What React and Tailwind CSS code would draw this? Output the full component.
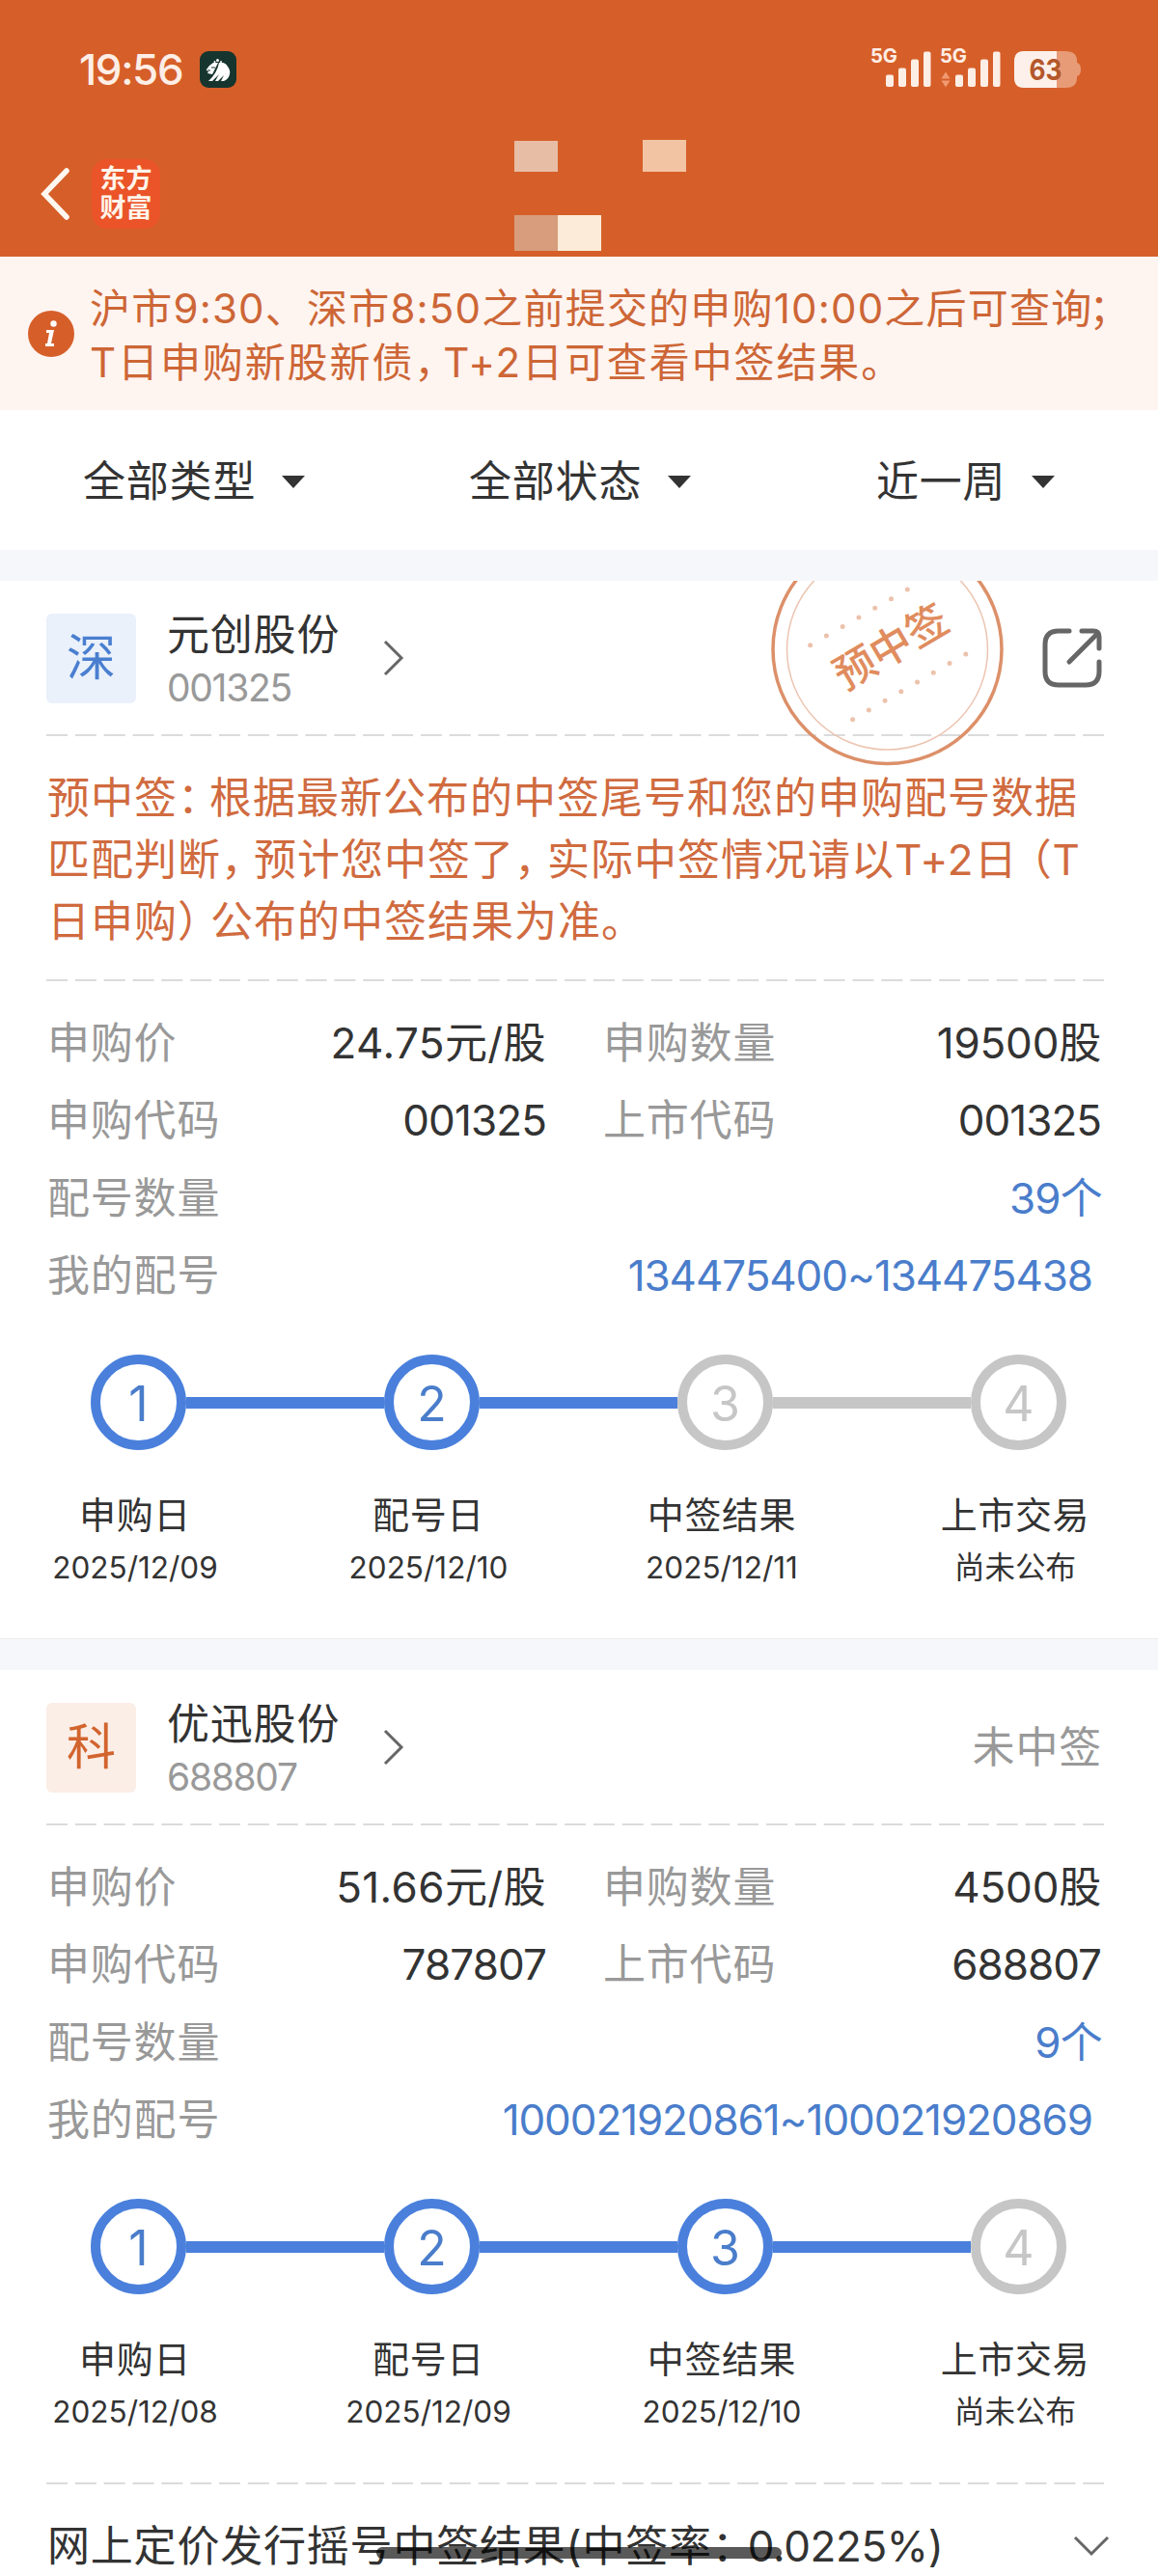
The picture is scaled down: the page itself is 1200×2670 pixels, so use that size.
import React from "react";

const steps = ["申购日", "配号日", "中签结果", "上市交易"];

const stocks = [
  {
    tag: "深",
    tagStyle: "bg-[#eaf1fb] text-[#4a7fd0]",
    name: "元创股份",
    code: "001325",
    won: true,
    price: "24.75元/股",
    amount: "19500股",
    applyCode: "001325",
    listCode: "001325",
    count: "39个",
    range: "134475400~134475438",
    done: 2,
    dates: ["2025/12/09", "2025/12/10", "2025/12/11", "尚未公布"],
  },
  {
    tag: "科",
    tagStyle: "bg-[#fbeee7] text-[#d2642e]",
    name: "优迅股份",
    code: "688807",
    won: false,
    price: "51.66元/股",
    amount: "4500股",
    applyCode: "787807",
    listCode: "688807",
    count: "9个",
    range: "100021920861~100021920869",
    done: 3,
    dates: ["2025/12/08", "2025/12/09", "2025/12/10", "尚未公布"],
  },
];

const Signal = ({ data }) => (
  <svg width="64" height="56" viewBox="-2 -4.5 64 56" className="text-[#fdeee6]">
    <text x="-1" y="16" fontSize="20.5" fontWeight="700" fill="currentColor" textLength="28" lengthAdjust="spacingAndGlyphs">
      5G
    </text>
    <g fill="currentColor">
      <rect x="15" y="29" width="8" height="12.5" rx="2" />
      <rect x="28" y="22" width="8" height="19.5" rx="2" />
      <rect x="41" y="13" width="8" height="28.5" rx="2" />
      <rect x="54" y="5" width="7.5" height="36.5" rx="2" />
    </g>
    {data && (
      <g fill="#f09a72">
        <path d="M5 26l4.5 7H.5z" />
        <path d="M5 42l4.5-7H.5z" />
      </g>
    )}
  </svg>
);

const StatusBar = () => (
  <div className="flex h-[136px] items-center pt-2 pl-[82px] text-[#fdeee6]">
    <span className="w-[125px] text-[44px] font-medium leading-none tracking-[-1.4px]">19:56</span>
    <svg width="38" height="38" viewBox="0 0 38 38">
      <rect width="38" height="38" rx="9" fill="#17352f" />
      <path d="M7 19l3-4 4-3h5l-2 4-4 8-5-1 1-2-2-1z" fill="#fff" />
      <path d="M20 12q6-1 9 4 3 4 2 8-1 5-6 7h-3l3-6-6 6h-3l4-7-7 7H9q9-8 11-19z" fill="#fff" />
      <path d="M12 17h4M8 20h3" stroke="#17352f" strokeWidth="1" />
      <g fill="#fff">
        <circle cx="15.5" cy="11" r="1" />
        <circle cx="18.5" cy="9.5" r="1.5" />
        <circle cx="22" cy="11" r="1" />
      </g>
    </svg>
    <div className="ml-[656px] flex items-center">
      <Signal />
      <span className="w-[8px]" />
      <Signal data />
      <svg width="70" height="38" viewBox="0 0 70 38" className="ml-[14px]">
        <path d="M10 0h43q12 0 12 10v2q4 1 4 7t-4 7v2q0 10-12 10H10Q0 38 0 27V11Q0 0 10 0z" fill="#e89b77" />
        <path d="M44 0H10Q0 0 0 11v16q0 11 10 11h34z" fill="#fdf0ea" />
        <text x="15.5" y="30" fontSize="30" fontWeight="700" fill="#b4572a" textLength="34" lengthAdjust="spacingAndGlyphs">
          63
        </text>
      </svg>
    </div>
  </div>
);

const NavBar = () => (
  <div className="flex h-[130px] items-center pl-[42px]">
    <svg width="32" height="54" viewBox="0 0 32 54" fill="none" stroke="#fff7f0" strokeWidth="5.5" strokeLinecap="round">
      <path d="M27 3L4 27l23 24" />
    </svg>
    <div className="ml-[21px] flex h-[72px] w-[71px] flex-col items-center justify-center rounded-2xl bg-[#ea5428] text-[27px] font-bold leading-[30px] text-[#fff5ea]">
      <span>东方</span>
      <span>财富</span>
    </div>
    {/* masked title */}
    <svg width="178" height="116" viewBox="0 0 178 116" className="mt-px ml-[367px]">
      <rect y="2" width="45" height="32" fill="#e8bda6" />
      <rect x="133" y="1" width="45" height="33" fill="#f2c4a4" />
      <rect y="79" width="45" height="37" fill="#d79d7c" />
      <rect x="45" y="79" width="45" height="37" fill="#fbebd8" />
    </svg>
  </div>
);

const Notice = () => (
  <div className="flex h-[159px] items-center bg-[#fef4f0] pl-[29px] text-[42px] leading-[56px] text-[#cd6636]">
    <svg width="48" height="48" viewBox="0 0 48 48" className="mt-[1px] shrink-0">
      <circle cx="24" cy="24" r="24" fill="#d65f29" />
      <circle cx="26.5" cy="13.5" r="3.2" fill="#fff" />
      <path d="M19 20h8l-3 14h3v3h-9v-3h2l2-11h-3z" fill="#fff" />
    </svg>
    <div className="ml-4 whitespace-nowrap pt-1">
      <p className="tracking-[1.2px]">
        沪市9:30、深市8:50之前提交的申购10:00之后可查询<span className="ml-[-4px]">；</span>
      </p>
      <p className="tracking-[1.9px]">
        T日申购新股新债<span className="tracking-[-12px]">，</span>T+2日可查看中签结果。
      </p>
    </div>
  </div>
);

const Filter = ({ label, className }) => (
  <div className={`flex items-center ${className}`}>
    <span className="tracking-[0.8px]">{label}</span>
    <svg width="24" height="13" viewBox="0 0 24 13" className="ml-[27px]">
      <path d="M0 0h24L12 13z" fill="#333" />
    </svg>
  </div>
);

const Filters = () => (
  <div className="flex h-[145px] items-center bg-white pt-[3px] text-[44px] text-[#333]">
    <Filter label="全部类型" className="ml-[86px] w-[400px]" />
    <Filter label="全部状态" className="w-[422px]" />
    <Filter label="近一周" className="" />
  </div>
);

const Dashes = () => (
  <svg width="1096" height="2" className="block">
    <path d="M0 1h1096" stroke="#d0d0d0" strokeWidth="1.5" strokeDasharray="22 7.84" />
  </svg>
);

const Stamp = () => (
  <svg width="244" height="194" viewBox="798 602 244 194" className="absolute left-[798px] top-0">
    <circle cx="919.5" cy="673" r="118.5" fill="none" stroke="#dc9069" strokeWidth="3.5" />
    <circle cx="919.5" cy="673" r="104" fill="none" stroke="#ecc4b0" strokeWidth="1.5" />
    <g stroke="#ecc2ac" strokeWidth="5" strokeLinecap="round" strokeDasharray="0 19.34">
      <path d="M839.6 668.7L957 601.5" />
      <path d="M883.6 745.7L1001.5 677.5" />
    </g>
    <text x="923" y="686" fontSize="43" fontWeight="500" fill="#e08c5e" textAnchor="middle" transform="rotate(-30.5 923 670)">
      预中签
    </text>
  </svg>
);

const ShareIcon = () => (
  <svg width="62" height="62" viewBox="0 0 62 62" fill="none" stroke="#666" strokeWidth="5" strokeLinecap="round" strokeLinejoin="round">
    <path d="M28 3H17Q3 3 3 17v28q0 14 14 14h28q14 0 14-14V35" />
    <path d="M41 3h12q6 0 6 6v12" />
    <path d="M57 6L28 35" />
  </svg>
);

const Field = ({ label, value, className, valueClass = "tracking-[-0.2px] text-[#333]" }) => (
  <div className={`flex justify-between ${className}`}>
    <span className="tracking-[0.8px] text-[#999]">{label}</span>
    <span className={valueClass}>{value}</span>
  </div>
);

const Fields = ({ stock }) => (
  <div className="pt-[24px] pl-px text-[44px] leading-[80.3px] whitespace-nowrap">
    <div className="flex gap-[59px]">
      <Field label="申购价" value={stock.price} className="w-[517px]" valueClass="tracking-[0.4px] text-[#333]" />
      <Field label="申购数量" value={stock.amount} className="w-[516px]" />
    </div>
    <div className="flex gap-[59px]">
      <Field label="申购代码" value={stock.applyCode} className="w-[517px]" valueClass="tracking-[-0.9px] text-[#333]" />
      <Field label="上市代码" value={stock.listCode} className="w-[516px]" valueClass="tracking-[-1px] text-[#333]" />
    </div>
    <Field label="配号数量" value={stock.count} className="pr-[2px]" valueClass="tracking-[-0.8px] text-[#4a7dcb]" />
    <Field label="我的配号" value={stock.range} className="pr-[12px]" valueClass="tracking-[-1.1px] text-[#4a7dcb]" />
  </div>
);

const Stepper = ({ done, dates }) => (
  <div>
    <div className="ml-[46px] flex items-center">
      {steps.map((step, i) => (
        <React.Fragment key={step}>
          {i > 0 && <div className={`h-[12px] w-[205px] ${i <= done ? "bg-[#4a80dc]" : "bg-[#c6c6c6]"}`} />}
          <div
            className={`flex size-[99px] shrink-0 items-center justify-center rounded-full border-[10px] pt-[2px] text-[50px] leading-none ${
              i < done ? "border-[#4a80dc] text-[#4a7dcb]" : "border-[#c6c6c6] text-[#c6c6c6]"
            }`}
          >
            {i + 1}
          </div>
        </React.Fragment>
      ))}
    </div>
    <div className="-ml-[60px] mt-[37px] flex text-center text-[#333]">
      {steps.map((step, i) => (
        <div key={step} className="w-[304px] shrink-0">
          <div className="text-[38px] leading-[60px] tracking-[0.6px]">{step}</div>
          <div className="text-[31.5px] leading-[50px]">{dates[i]}</div>
        </div>
      ))}
    </div>
  </div>
);

const StockCard = ({ stock, children }) => (
  <section className="relative bg-white pr-14 pl-12">
    <div className="flex h-[159px] items-center pt-px">
      <div className={`flex size-[93px] items-center justify-center rounded-md text-[51px] ${stock.tagStyle}`}>{stock.tag}</div>
      <div className="ml-[32px] w-[224px] pt-[4px]">
        <div className="text-[44px] leading-[57px] tracking-[0.8px] text-[#333]">{stock.name}</div>
        <div className="text-[39px] leading-[52px] tracking-[-1.3px] text-[#999]">{stock.code}</div>
      </div>
      <svg width="22" height="38" viewBox="0 0 22 38" fill="none" stroke="#666" strokeWidth="3">
        <path d="M2 2l17 17L2 36" />
      </svg>
      <div className="ml-auto pr-[2px]">
        {stock.won ? <ShareIcon /> : <span className="text-[44px] tracking-[0.8px] text-[#999]">未中签</span>}
      </div>
    </div>
    <Dashes />
    {stock.won && (
      <>
        <Stamp />
        <div className="h-[252px] whitespace-nowrap pt-[32px] pl-px text-[44px] leading-[64px] tracking-[1px] text-[#d06b3f]">
          <p>
            预中签<span className="tracking-[-11px]">：</span>根据最新公布的中签尾号和您的申购配号数据
          </p>
          <p>
            匹配判断<span className="tracking-[-10px]">，</span>预计您中签了<span className="tracking-[-10px]">，</span>实际中签情况请以T+2
            <span className="tracking-[-8px]">日</span>（T
          </p>
          <p>
            日申购<span className="tracking-[-10px]">）</span>公布的中签结果为准。
          </p>
        </div>
        <Dashes />
      </>
    )}
    <Fields stock={stock} />
    <div className="mt-[42px]">
      <Stepper done={stock.done} dates={stock.dates} />
    </div>
    {children}
  </section>
);

export default function App() {
  return (
    <div className="relative h-[2670px] w-[1200px] overflow-hidden bg-[#f6f7fa] font-[Inter,'Noto_Sans_CJK_SC',sans-serif]">
      <header className="bg-[#d65f29]">
        <StatusBar />
        <NavBar />
      </header>
      <Notice />
      <Filters />
      <div className="mt-[32px] h-[1097px] border-b border-[#ececec] bg-white">
        <StockCard stock={stocks[0]} />
      </div>
      <div className="mt-[32px] bg-white">
        <StockCard stock={stocks[1]}>
          <div className="pt-[48px]">
            <Dashes />
          </div>
          <div className="-mr-1.5 flex h-[128px] items-center justify-between whitespace-nowrap pl-px text-[44px] text-[#333]">
            <span className="tracking-[0.8px]">
              网上定价发行摇号中签结果(中签率<span className="tracking-[-7px]">：</span>
              <span className="tracking-[-0.4px]">0.0225%)</span>
            </span>
            <svg width="38" height="22" viewBox="0 0 38 22" fill="none" stroke="#666" strokeWidth="3">
              <path d="M2 2l17 17L36 2" />
            </svg>
          </div>
        </StockCard>
      </div>
      {/* home indicator */}
      <div className="absolute left-[390px] top-[2640px] h-[12px] w-[420px] rounded-full bg-black/65" />
    </div>
  );
}
